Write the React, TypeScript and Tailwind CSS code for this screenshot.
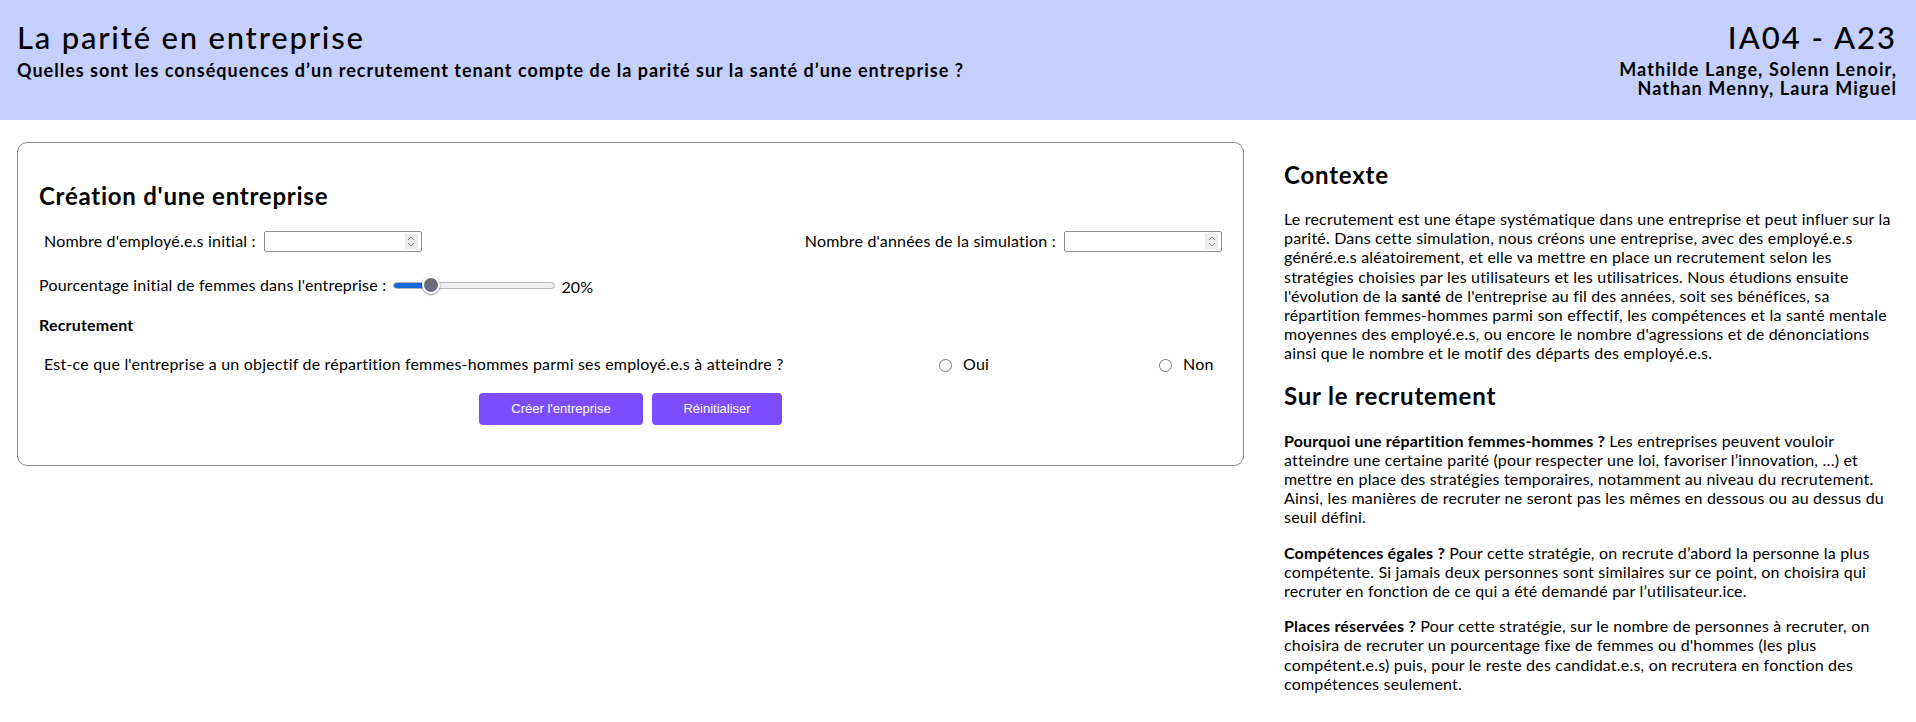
import React from "react";

function NumberBox() {
  return (
    <div className="w-[158px] h-[21px] border border-[#8f8f8f] rounded-[2px] bg-white flex items-center justify-end pr-[3px]">
      <div className="w-[13px] h-[15px] bg-[#ececef] flex flex-col items-center justify-center gap-[1px]">
        <svg width="8" height="5" viewBox="0 0 8 5">
          <path d="M1 4 L4 1 L7 4" fill="none" stroke="#8a8a8a" strokeWidth="1" />
        </svg>
        <svg width="8" height="5" viewBox="0 0 8 5">
          <path d="M1 1 L4 4 L7 1" fill="none" stroke="#8a8a8a" strokeWidth="1" />
        </svg>
      </div>
    </div>
  );
}

function Radio() {
  return <span className="inline-block w-[13px] h-[13px] shrink-0 rounded-full border-[1.5px] border-[#7a7a7a] bg-white mt-[2px]" />;
}

function Slider() {
  return (
    <div className="relative w-[162px] h-[20px] flex items-center">
      <div className="w-full h-[7px] rounded-full bg-[#efefef] border border-[#b5b5b5] overflow-hidden flex">
        <div className="w-[38px] h-full bg-[#1565d8]" />
      </div>
      <div className="absolute left-[29px] top-[1px] w-[18px] h-[18px] rounded-full bg-[#6b6b7b] border-2 border-white shadow-[0_1px_2px_rgba(0,0,0,0.45)]" />
    </div>
  );
}

export default function App() {
  return (
    <div className="min-h-[722px] bg-white text-black font-['Lato','Noto_Sans',sans-serif]">
      <header className="h-[120px] bg-[#c5d0fe] px-[17px] flex justify-between">
        <div className="pt-[18px]">
          <h1 className="text-[31px] leading-[38px] font-medium tracking-[1.8px]">La parité en entreprise</h1>
          <p className="mt-[3px] text-[18px] leading-[22px] font-bold tracking-[1px]">
            Quelles sont les conséquences d’un recrutement tenant compte de la parité sur la santé d’une entreprise ?
          </p>
        </div>
        <div className="pt-[18px] text-right pr-[2px]">
          <div className="text-[31px] leading-[38px] font-medium tracking-[2px]">IA04 - A23</div>
          <div className="mt-[4px] text-[18px] leading-[19px] font-bold tracking-[1.1px]">
            Mathilde Lange, Solenn Lenoir,
            <br />
            Nathan Menny, Laura Miguel
          </div>
        </div>
      </header>

      <main className="flex px-[17px] pt-[22px] gap-[40px]">
        <section className="w-[1227px] shrink-0 border border-[#8c8c8c] rounded-[10px] px-[21px] pt-[38px] pb-[40px] text-[16px] tracking-[0.2px] self-start">
          <h2 className="text-[24px] leading-[30px] font-bold tracking-[0.75px]">Création d'une entreprise</h2>

          <div className="mt-[18px] h-[24px] flex items-center justify-between">
            <div className="flex items-center pl-[5px]">
              <span className="mr-[8px]">Nombre d'employé.e.s initial :</span>
              <NumberBox />
            </div>
            <div className="flex items-center">
              <span className="mr-[8px]">Nombre d'années de la simulation :</span>
              <NumberBox />
            </div>
          </div>

          <div className="mt-[22px] h-[20px] flex items-center">
            <span className="mr-[7px]">Pourcentage initial de femmes dans l'entreprise :</span>
            <Slider />
            <span className="ml-[6px] mt-[4px]">20%</span>
          </div>

          <h3 className="mt-[20px] leading-[20px] font-bold">Recrutement</h3>

          <div className="mt-[19px] h-[20px] flex items-center pl-[5px]">
            <span className="w-[895px] shrink-0">
              Est-ce que l'entreprise a un objectif de répartition femmes-hommes parmi ses employé.e.s à atteindre ?
            </span>
            <label className="w-[220px] shrink-0 flex items-center gap-[11px]">
              <Radio />
              <span>Oui</span>
            </label>
            <label className="flex items-center gap-[11px]">
              <Radio />
              <span>Non</span>
            </label>
          </div>

          <div className="mt-[19px] flex justify-center gap-[9px] font-['Liberation_Sans',Arial,sans-serif] text-[13px] tracking-normal">
            <button className="w-[164px] h-[32px] rounded-[4px] bg-[#7c4dff] text-white">Créer l'entreprise</button>
            <button className="w-[130px] h-[32px] rounded-[4px] bg-[#7c4dff] text-white">Réinitialiser</button>
          </div>
        </section>

        <aside className="flex-1 pt-[18px] text-[16px] leading-[19.2px] tracking-[0.2px]">
          <h2 className="text-[24px] leading-[30px] font-bold tracking-[0.8px]">Contexte</h2>
          <p className="mt-[19px]">
            Le recrutement est une étape systématique dans une entreprise et peut influer sur la parité. Dans cette simulation, nous créons une entreprise, avec des employé.e.s généré.e.s aléatoirement, et elle va mettre en place un recrutement selon les stratégies choisies par les utilisateurs et les utilisatrices. Nous étudions ensuite l'évolution de la <b>santé</b> de l'entreprise au fil des années, soit ses bénéfices, sa répartition femmes-hommes parmi son effectif, les compétences et la santé mentale moyennes des employé.e.s, ou encore le nombre d'agressions et de dénonciations ainsi que le nombre et le motif des départs des employé.e.s.
          </p>
          <h2 className="mt-[18px] text-[24px] leading-[30px] font-bold tracking-[0.8px]">Sur le recrutement</h2>
          <p className="mt-[20px]">
            <b>Pourquoi une répartition femmes-hommes ?</b> Les entreprises peuvent vouloir atteindre une certaine parité (pour respecter une loi, favoriser l’innovation, …) et mettre en place des stratégies temporaires, notamment au niveau du recrutement. Ainsi, les manières de recruter ne seront pas les mêmes en dessous ou au dessus du seuil défini.
          </p>
          <p className="mt-[16px]">
            <b>Compétences égales ?</b> Pour cette stratégie, on recrute d’abord la personne la plus compétente. Si jamais deux personnes sont similaires sur ce point, on choisira qui recruter en fonction de ce qui a été demandé par l’utilisateur.ice.
          </p>
          <p className="mt-[16px]">
            <b>Places réservées ?</b> Pour cette stratégie, sur le nombre de personnes à recruter, on choisira de recruter un pourcentage fixe de femmes ou d'hommes (les plus compétent.e.s) puis, pour le reste des candidat.e.s, on recrutera en fonction des compétences seulement.
          </p>
        </aside>
      </main>
    </div>
  );
}
